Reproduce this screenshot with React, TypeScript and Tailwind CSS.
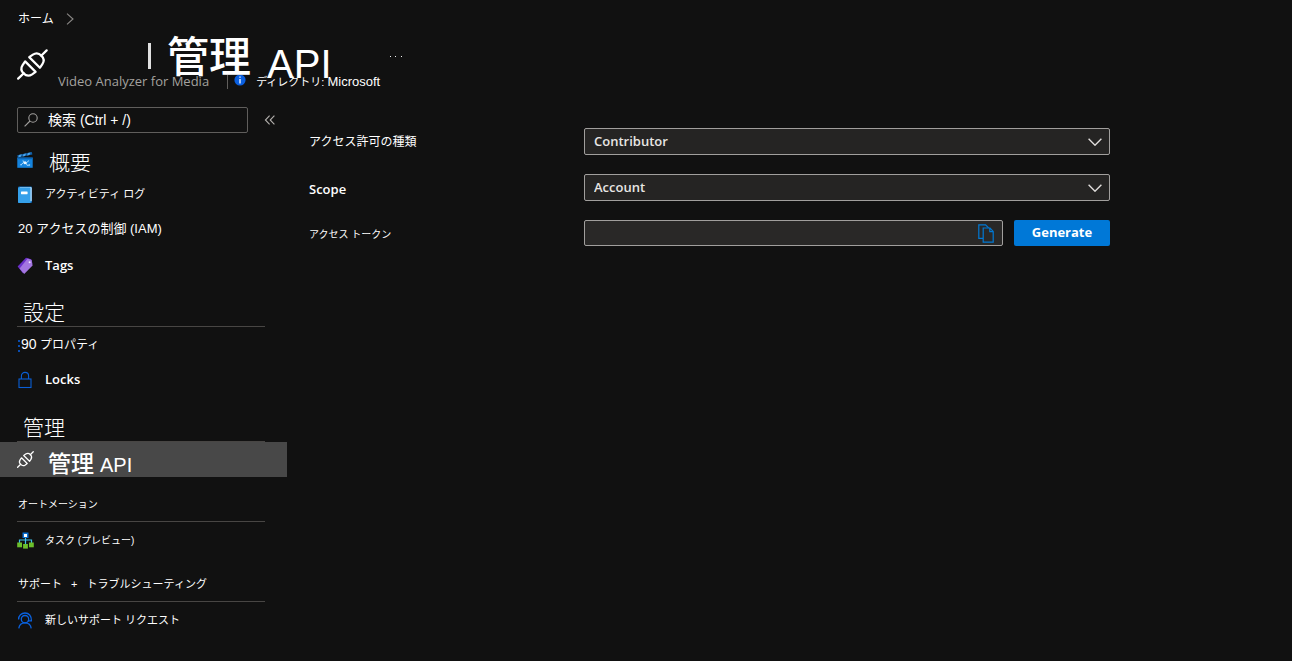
import type { ReactNode } from "react";

function PlugIcon({ className, stroke }: { className: string; stroke: number }) {
  return (
    <svg viewBox="0 0 32 32" className={className} fill="none" stroke="currentColor" strokeWidth={stroke} strokeLinecap="round" strokeLinejoin="round" aria-hidden="true">
      <path d="M1.2 30.6 L7 25 M25 7 L30.6 1.4" />
      <path d="M8.4 12.8 L19.2 23.6 L15.6 26.2 C12.6 28.2 9.2 27.6 6.8 25.2 C4.4 22.8 3.8 19.6 5.8 16.6 Z" />
      <path d="M12.6 8.4 L23.6 19.4 L26.2 15.6 C28.2 12.6 27.6 9.2 25.2 6.8 C22.8 4.4 19.4 3.8 16.4 5.8 Z" />
    </svg>
  );
}

function ClapperIcon() {
  return (
    <svg viewBox="0 0 16 16" className="size-4" aria-hidden="true">
      <path d="M0.3 3.2 L14.8 0 L15.4 2.6 L0.8 5.6 Z" fill="#0f5fa8" />
      <path d="M2 3 L4.8 2.3 L3.8 4.8 L1.4 5.3 Z M6.6 2 L9.2 1.4 L8 3.9 L5.6 4.4 Z M11 1 L13.6 .4 L12.4 3 L10 3.5 Z" fill="#4aa3ea" />
      <rect x="0.3" y="5.6" width="15.4" height="10.2" fill="#1483dd" />
      <path d="M.3 5.6 H15.7 V7.2 H.3 Z" fill="#0b65b8" />
      <path d="M4 12.8 L6.6 10.4 L9 11 L12 8.6 M6.6 10.4 L6 8.4 M9 11 L10.2 13.4 L12.6 13" stroke="#a9d8fb" strokeWidth="1" fill="none" />
      <circle cx="8" cy="10.8" r="1.5" fill="#e8f6ff" />
      <circle cx="4" cy="12.8" r="0.8" fill="#a9d8fb" />
      <circle cx="12.4" cy="13" r="0.8" fill="#a9d8fb" />
    </svg>
  );
}

function BookIcon() {
  return (
    <svg viewBox="0 0 16 18" className="h-[18px] w-4" aria-hidden="true">
      <rect x="1" y="0.5" width="14" height="16.5" rx="1.2" fill="#0f6cbd" />
      <rect x="2.6" y="1.2" width="12" height="14" rx="0.6" fill="#e6f4fd" />
      <rect x="1" y="1.5" width="12.6" height="15.5" rx="1" fill="#35a0ea" />
      <rect x="4" y="5.6" width="6.6" height="2.6" rx="0.4" fill="#ffffff" />
    </svg>
  );
}

function TagIcon() {
  return (
    <svg viewBox="0 0 16 18" className="h-[18px] w-4" aria-hidden="true">
      <path d="M9 0.8 L14.2 2.2 L15.4 6.6 L6 16.2 L0.6 9.4 Z" fill="#6a2fc9" />
      <path d="M10.6 1.6 L14.6 3 L15.6 8.4 L7.2 17 L2.6 11.4 Z" fill="#a476e0" />
      <circle cx="12.6" cy="5.2" r="1" fill="#f1e8ff" />
    </svg>
  );
}

function LockIcon() {
  return (
    <svg viewBox="0 0 16 18" className="h-[18px] w-4" fill="none" stroke="#0a5fd6" strokeWidth="1.1" aria-hidden="true">
      <rect x="2" y="8" width="12" height="8.5" />
      <path d="M4.4 8 V5 C4.4 2.6 6 1.4 8 1.4 C10 1.4 11.6 2.6 11.6 5 V8" />
    </svg>
  );
}

function TasksIcon() {
  return (
    <svg viewBox="0 0 17 17" className="size-[17px]" aria-hidden="true">
      <path d="M8.5 5 V12 M2.5 11 V8 H14.5 V11" stroke="#3ec1e8" strokeWidth="1.2" fill="none" />
      <rect x="5.5" y="0.5" width="6" height="5.5" fill="#0a6fd0" />
      <rect x="7" y="2" width="3" height="3" fill="#ffffff" />
      <rect x="0.2" y="10.5" width="4.8" height="4.8" fill="#6cbf2c" />
      <rect x="6.1" y="12" width="4.8" height="4.6" fill="#6cbf2c" />
      <rect x="12" y="10.5" width="4.8" height="4.8" fill="#6cbf2c" />
    </svg>
  );
}

function SupportIcon() {
  return (
    <svg viewBox="0 0 16 17" className="h-[17px] w-4" fill="none" stroke="#0a62e0" strokeWidth="1.3" aria-hidden="true">
      <circle cx="8" cy="7.2" r="3.7" />
      <path d="M1.6 7.4 C1.6 3.4 4.4 1 8 1 C11.8 1 14.6 3.6 14.4 8.8 H10.8" />
      <path d="M1.8 16.4 C2.2 13.2 4.6 10.9 8 10.9 C11.4 10.9 13.8 13.2 14.2 16.4" />
    </svg>
  );
}

function CopyIcon() {
  return (
    <svg viewBox="0 0 16 19" className="h-[19px] w-4" fill="none" stroke="#0078d4" strokeWidth="1.2" aria-hidden="true">
      <path d="M5 14.4 H.8 V.8 H7.6 L10.6 3.8" />
      <path d="M5.2 4 H12 L15.2 7.4 V18.2 H5.2 Z M11.8 4 V7.6 H15.2" />
    </svg>
  );
}

function ChevronDown() {
  return (
    <svg viewBox="0 0 14 8" className="pointer-events-none absolute top-1/2 right-2 h-2 w-3.5 -translate-y-1/2" fill="none" stroke="#e1dfdd" strokeWidth="1.4" aria-hidden="true">
      <path d="M.6 .8 L7 7.2 L13.4 .8" />
    </svg>
  );
}

function NavItem({ icon, height, children }: { icon?: ReactNode; height: string; children: ReactNode }) {
  return (
    <a href="#" className={`flex items-center whitespace-nowrap ${icon ? "pl-[17px]" : "pl-[18px]"} ${height}`}>
      {icon && <span className="flex w-7 shrink-0 items-center">{icon}</span>}
      {children}
    </a>
  );
}

function SelectField({ id, label, value, latin }: { id: string; label: string; value: string; latin?: boolean }) {
  return (
    <>
      <label htmlFor={id} className={latin ? "pt-1 font-['Open_Sans','Noto_Sans',sans-serif] text-[13px] font-semibold" : "text-xs"}>
        {label}
      </label>
      <div className="relative">
        <select id={id} defaultValue={value} className="block h-[27px] w-full appearance-none rounded-xs border border-[#a19f9d] bg-[#252423] pr-8 pl-[9px] font-['Open_Sans','Noto_Sans',sans-serif] text-[13px] font-semibold text-[#e8e6e4]">
          <option>{value}</option>
        </select>
        <ChevronDown />
      </div>
    </>
  );
}

export default function App() {
  return (
    <div className="min-h-screen bg-[#111111] font-['Liberation_Sans','Noto_Sans_CJK_JP',sans-serif] text-white">
      <header className="relative">
        <nav aria-label="breadcrumb" className="flex h-9 items-center gap-3 pt-0.5 pl-[18px] text-xs">
          <a href="#">ホーム</a>
          <svg viewBox="0 0 8 12" className="h-3 w-2" fill="none" stroke="#8a8886" strokeWidth="1.1" aria-hidden="true">
            <path d="M1 .6 L7 6 L1 11.4" />
          </svg>
        </nav>
        <div className="absolute top-[72px] left-[58px] flex h-5 items-center whitespace-nowrap">
          <span className="font-['Open_Sans','Noto_Sans',sans-serif] text-[13px] text-[#a3a19f]">Video Analyzer for Media</span>
          <span className="ml-[18px] h-3.5 w-px bg-[#605e5c]" />
          <svg viewBox="0 0 12 12" className="mb-1 ml-1.5 size-3" aria-hidden="true">
            <circle cx="6" cy="6" r="5.6" fill="#0a5fe0" />
            <path d="M6 5 V9.4 M6 2.4 V3.8" stroke="#fff" strokeWidth="1.3" />
          </svg>
          <span className="ml-2.5 text-[11px]">
            ディレクトリ: <span className="text-[13px]">Microsoft</span>
          </span>
        </div>
        <div className="relative flex h-14 items-center pl-[17px]">
          <PlugIcon className="size-[31px] shrink-0" stroke={2.3} />
          <span className="mb-4 ml-[100px] h-[26px] w-[3px] shrink-0 bg-[#e0e0e0]" />
          <h1 className="ml-4 flex h-14 items-start gap-4 whitespace-nowrap">
            <span className="font-['Noto_Sans_CJK_JP',sans-serif] text-[42px] leading-9 font-medium">管理</span>
            <span className="text-[40px] leading-[56px]">API</span>
          </h1>
          <button type="button" aria-label="More" className="mb-4 ml-[58px] flex w-3 justify-between">
            <span className="size-px bg-[#f0f0f0]" />
            <span className="size-px bg-[#f0f0f0]" />
            <span className="size-px bg-[#f0f0f0]" />
          </button>
        </div>
      </header>

      <div className="flex pt-[15px]">
        <aside className="w-[287px] shrink-0">
          <div className="flex items-center gap-4 pl-[17px]">
            <label className="flex h-[26px] w-[231px] items-center gap-2.5 rounded-xs border border-[#605e5c] pl-1.5">
              <svg viewBox="0 0 14 14" className="size-3.5 shrink-0" fill="none" stroke="#a19f9d" strokeWidth="1.1" aria-hidden="true">
                <circle cx="9" cy="5" r="4.2" />
                <path d="M6 8 L.6 13.4" />
              </svg>
              <input type="search" aria-label="検索" placeholder="検索 (Ctrl + /)" className="w-full min-w-0 bg-transparent text-sm outline-none placeholder:text-white" />
            </label>
            <button type="button" aria-label="Collapse menu">
              <svg viewBox="0 0 12 10" className="h-2.5 w-3" fill="none" stroke="#b3b0ad" strokeWidth="1.1" aria-hidden="true">
                <path d="M5.6 .6 L1.4 5 L5.6 9.4 M10.4 .6 L6.2 5 L10.4 9.4" />
              </svg>
            </button>
          </div>

          <nav aria-label="menu" className="pt-3">
            <NavItem height="h-[33px]" icon={<span className="mb-1"><ClapperIcon /></span>}>
              <span className="pt-0.5 pl-1 text-[21px] font-light">概要</span>
            </NavItem>
            <NavItem height="h-[33px]" icon={<BookIcon />}>
              <span className="text-[11px]">アクティビティ ログ</span>
            </NavItem>
            <NavItem height="h-9">
              <span className="text-[13px]">20 アクセスの制御 (IAM)</span>
            </NavItem>
            <NavItem height="h-[37px]" icon={<TagIcon />}>
              <span className="font-['Open_Sans','Noto_Sans',sans-serif] text-[13px] font-semibold">Tags</span>
            </NavItem>

            <h2 className="mr-[22px] ml-[17px] flex h-[43px] items-end border-b border-[#484644] pl-1.5 text-[21px] leading-[26px] font-light">設定</h2>
            <NavItem height="h-[34px]">
              <span className="text-xs">
                <span className="mr-px inline-flex h-3 w-0.5 flex-col justify-between align-middle">
                  <span className="h-0.5 bg-[#0a4db0]" />
                  <span className="h-0.5 bg-[#0a4db0]" />
                  <span className="h-0.5 bg-[#0a4db0]" />
                </span>
                <span className="text-sm">90</span> プロパティ
              </span>
            </NavItem>
            <NavItem height="h-[38px]" icon={<LockIcon />}>
              <span className="font-['Open_Sans','Noto_Sans',sans-serif] text-[13px] font-semibold">Locks</span>
            </NavItem>

            <h2 className="mr-[22px] ml-[17px] flex h-[43px] items-end border-b border-[#484644] pl-1.5 text-[21px] leading-[26px] font-light">管理</h2>
            <a href="#" aria-current="page" className="flex h-[35px] items-center bg-[#484848] pl-[17px] whitespace-nowrap">
              <PlugIcon className="size-[17px] shrink-0" stroke={2.4} />
              <span className="ml-3.5 flex items-baseline gap-1.5 pt-2 leading-8">
                <span className="text-[23px] font-medium">管理</span>
                <span className="text-xl">API</span>
              </span>
            </a>

            <h2 className="mr-[22px] ml-[17px] flex h-[45px] items-end border-b border-[#484644] pb-1 pl-px text-[10px] leading-6">オートメーション</h2>
            <NavItem height="h-9" icon={<TasksIcon />}>
              <span className="text-[10px]">タスク (プレビュー)</span>
            </NavItem>

            <h2 className="mr-[22px] ml-[17px] flex h-11 items-end border-b border-[#484644] pb-1 pl-px text-[11px] leading-[26px]">
              <span>
                サポート <span className="mx-1.5">+</span> トラブルシューティング
              </span>
            </h2>
            <NavItem height="h-9" icon={<SupportIcon />}>
              <span className="text-[11px]">新しいサポート リクエスト</span>
            </NavItem>
          </nav>
        </aside>

        <main className="min-w-0 flex-1 pt-[21px] pl-[22px]">
          <form className="grid w-full max-w-[801px] grid-cols-[275px_1fr] items-center gap-y-[19px]">
            <SelectField id="permission" label="アクセス許可の種類" value="Contributor" />
            <SelectField id="scope" label="Scope" value="Account" latin />
            <label htmlFor="token" className="pt-0.5 text-[10px]">
              アクセス トークン
            </label>
            <div className="flex items-end gap-[11px]">
              <div className="flex h-[26px] min-w-0 flex-1 items-center rounded-xs border border-[#a19f9d] bg-[#292827] pr-2">
                <input id="token" type="text" className="min-w-0 flex-1 bg-transparent px-2 text-[13px] outline-none" />
                <button type="button" aria-label="Copy">
                  <CopyIcon />
                </button>
              </div>
              <button type="button" className="h-[26px] w-24 rounded-xs bg-[#0078d7] font-['Open_Sans','Noto_Sans',sans-serif] text-[13px] font-bold">
                Generate
              </button>
            </div>
          </form>
        </main>
      </div>
    </div>
  );
}
